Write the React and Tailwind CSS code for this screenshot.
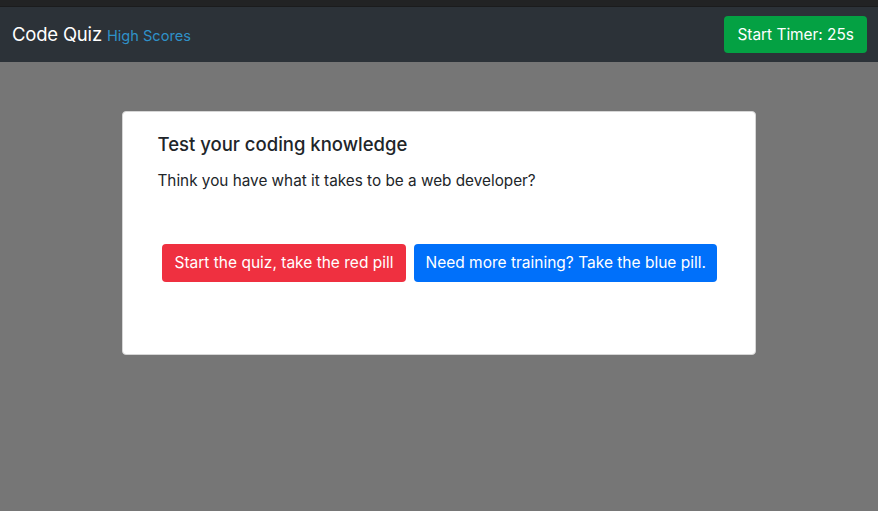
import React from 'react';

const App = () => {
    return (
        <div className="w-[878px] h-[511px] bg-[#767676] flex flex-col font-['Inter','Liberation_Sans',sans-serif] overflow-hidden">
            {/* top strip */}
            <div className="h-[7px] bg-[#222324] border-b border-[#1b1c1d]"></div>

            {/* Navbar */}
            <nav className="h-[55px] bg-[#2c3238] flex items-center justify-between pl-3 pr-3">
                <div className="flex items-baseline gap-[5px]">
                    <span className="text-white text-[18.5px] tracking-[-0.2px]">Code Quiz</span>
                    <a className="text-[#2f91c8] text-[14.6px]">High Scores</a>
                </div>
                <button className="bg-[#04a143] text-white text-[15.4px] rounded-[4px] h-[37px] px-[13px] mr-[-1px]">
                    Start Timer: 25s
                </button>
            </nav>

            {/* Card */}
            <div className="flex justify-center pt-[49px]">
                <div className="w-[634px] h-[244px] bg-white rounded-[4px] border border-[#d6d6d6] pl-[35px] pt-[19px] mr-[1px]">
                    <h2 className="text-[#212529] text-[18.5px] font-medium">Test your coding knowledge</h2>
                    <p className="text-[#212529] text-[15.3px] mt-[11px]">Think you have what it takes to be a web developer?</p>
                    <div className="flex gap-[8px] mt-[51px] pl-[4px]">
                        <button className="bg-[#ef3040] text-white text-[15.5px] rounded-[4px] h-[38px] px-[13px]">
                            Start the quiz, take the red pill
                        </button>
                        <button className="bg-[#0070fa] text-white text-[15.5px] rounded-[4px] h-[38px] px-[11px]">
                            Need more training? Take the blue pill.
                        </button>
                    </div>
                </div>
            </div>
        </div>
    );
};

export default App;
